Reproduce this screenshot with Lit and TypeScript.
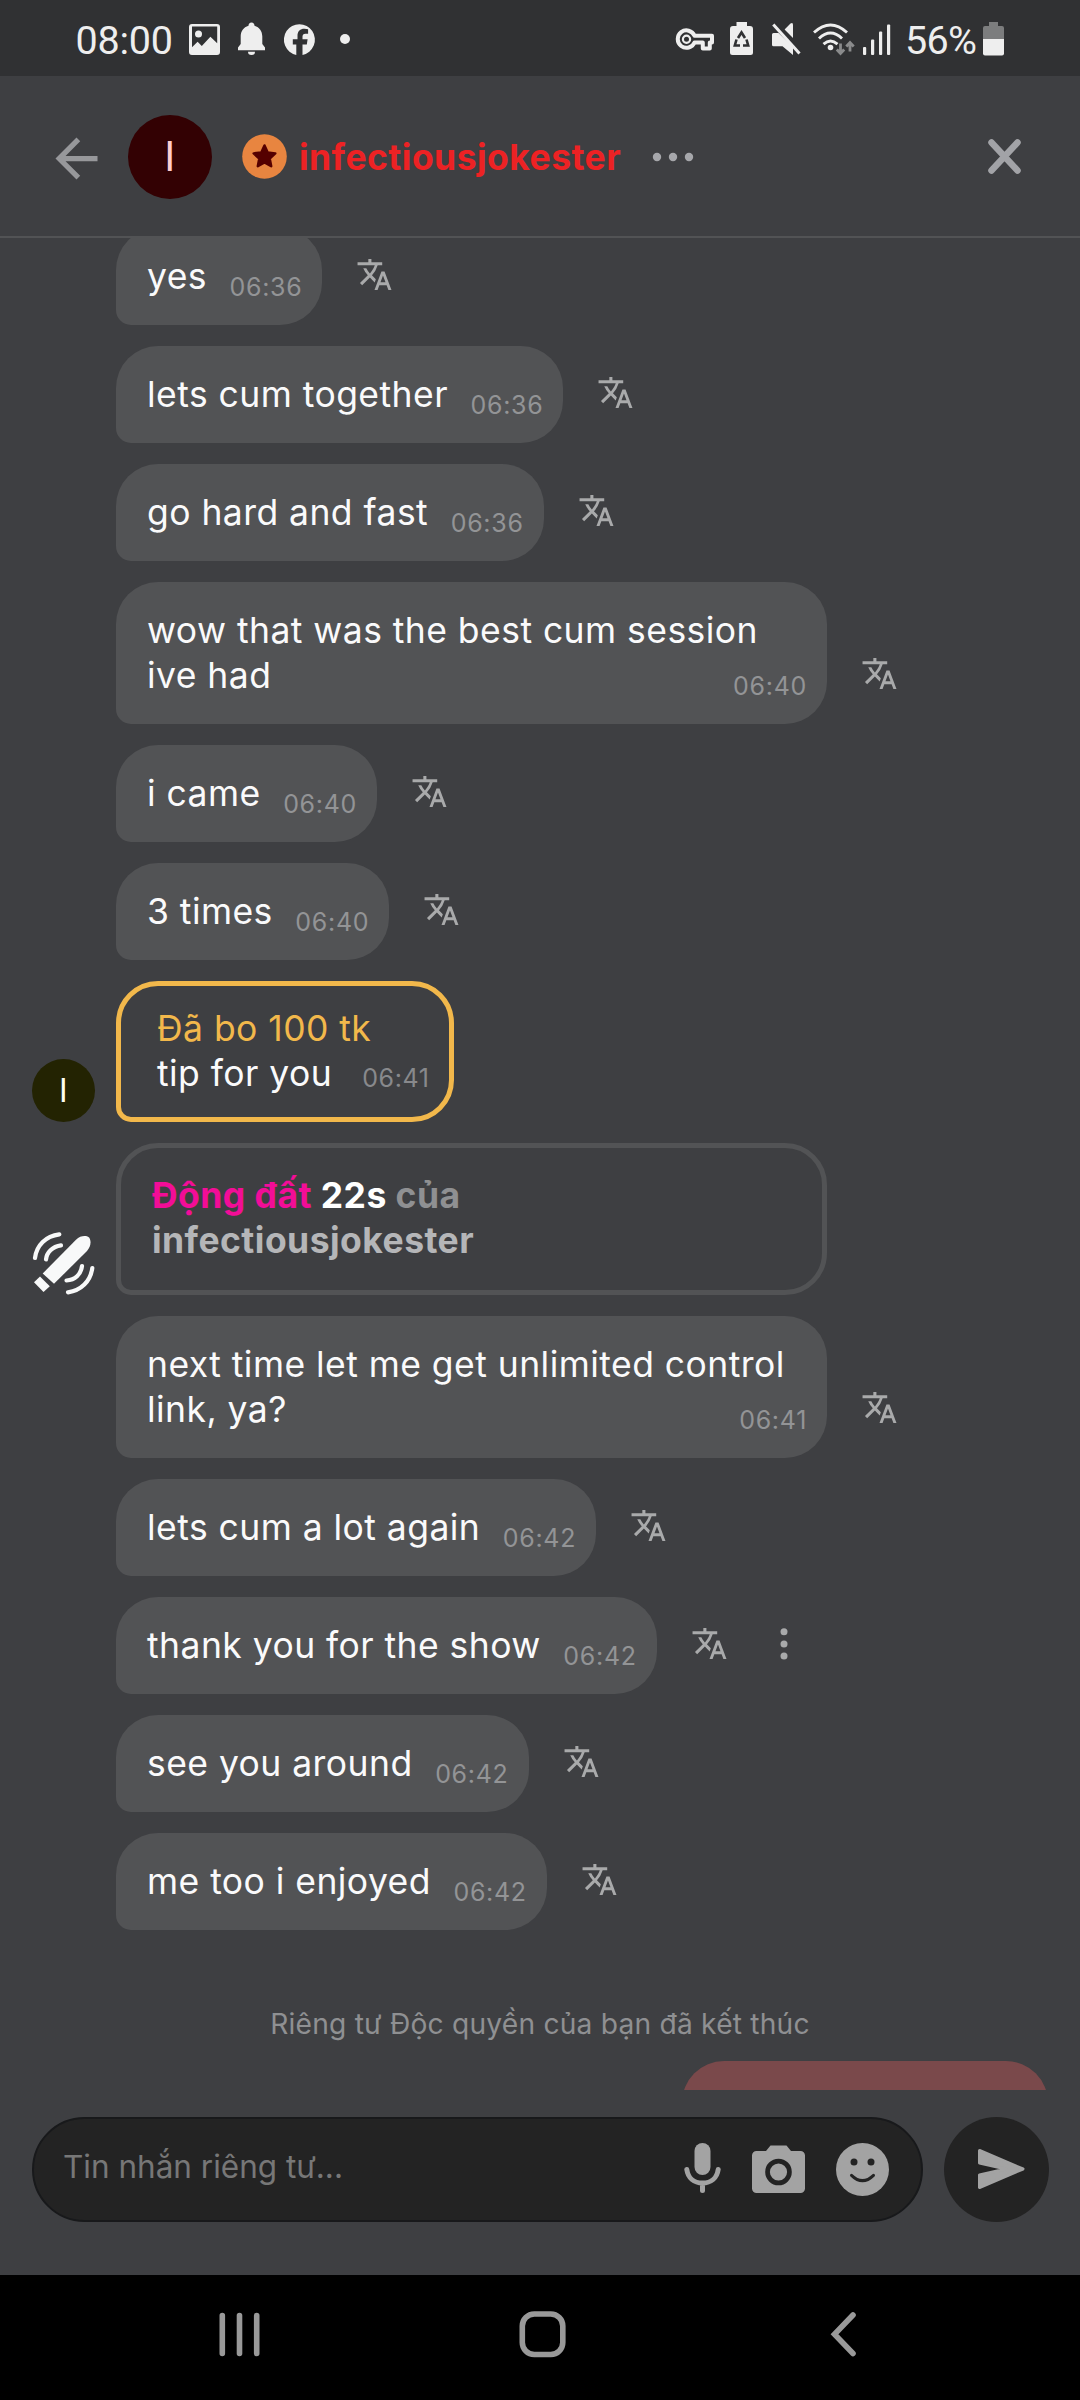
import { LitElement, html, css, svg, nothing } from "lit";
import { customElement, property } from "lit/decorators.js";
import { classMap } from "lit/directives/class-map.js";

interface Message {
  lines: string[];
  time: string;
  menu?: boolean;
}

const before: Message[] = [
  { lines: ["yes"], time: "06:36" },
  { lines: ["lets cum together"], time: "06:36" },
  { lines: ["go hard and fast"], time: "06:36" },
  { lines: ["wow that was the best cum session", "ive had"], time: "06:40" },
  { lines: ["i came"], time: "06:40" },
  { lines: ["3 times"], time: "06:40" },
];

const after: Message[] = [
  { lines: ["next time let me get unlimited control", "link, ya?"], time: "06:41" },
  { lines: ["lets cum a lot again"], time: "06:42" },
  { lines: ["thank you for the show"], time: "06:42", menu: true },
  { lines: ["see you around"], time: "06:42" },
  { lines: ["me too i enjoyed"], time: "06:42" },
];

@customElement("status-bar")
class StatusBar extends LitElement {
  static styles = css`
    :host {
      display: flex;
      box-sizing: border-box;
      height: 76px;
      padding: 0 76px 0 75.5px;
      justify-content: space-between;
      background: #303133;
      color: #eeeeee;
      font: 39.5px/47px Roboto, sans-serif;
    }
    .side { display: flex; padding-top: 17px; align-items: flex-start; }
    .clock { width: 113.5px; letter-spacing: -0.2px; }
    .percent { width: 78px; letter-spacing: -0.7px; }
    svg { display: block; height: 36px; margin-top: 4px; fill: #eeeeee; overflow: visible; flex: none; }
    .w49 { width: 49px; }
    .w45 { width: 45px; }
    .w57 { width: 57px; }
    .w10 { width: 10px; }
    .w54 { width: 54px; }
    .w42 { width: 42px; }
    .w41 { width: 41px; }
    .w50 { width: 50px; }
    .w43 { width: 42px; }
    .w21 { width: 21px; }
  `;
  render() {
    return html`
      <div class="side">
        <span class="clock">08:00</span>
        <svg class="w49" viewBox="0 0 49 36">
          <path fill-rule="evenodd" d="M3 3h25a3 3 0 0 1 3 3v25a3 3 0 0 1-3 3H3a3 3 0 0 1-3-3V6a3 3 0 0 1 3-3zm0 2.6v20.6l5.6-5.4 4.2 4.2 8.6-9.2 6.8 6.4V5.6z"/>
          <circle cx="9.5" cy="13" r="3.5"/>
        </svg>
        <svg class="w45" viewBox="0 0 45 36">
          <path d="M13.5 1.5c1.9 0 3 1.300 3 3.200 5 1.400 7.800 5.600 7.800 10.800v7.500l2.700 3.500v2.700H0v-2.700l2.700-3.500v-7.500c0-5.200 2.800-9.400 7.800-10.800 0-1.900 1.100-3.200 3-3.200z"/>
          <path d="M10 30.800h7a3.500 3.200 0 0 1-7 0z"/>
        </svg>
        <svg class="w57" viewBox="0 0 57 36">
          <path d="M12.300 33.900A15.500 15.500 0 1 1 18.500 33.900V23.500h4.300l.8-5.300h-5.100v-2.700c0-1.700.9-2.800 2.900-2.800h2.700V8.200c-.9-.2-2.300-.4-3.700-.4-4.200 0-6.900 2.500-6.900 7v3.400H8.800v5.300h3.500z" transform="translate(1)"/>
        </svg>
        <svg class="w10" viewBox="0 0 10 36"><circle cx="5" cy="18" r="5"/></svg>
      </div>
      <div class="side">
        <svg class="w54" viewBox="0 0 54 36">
          <path fill="none" stroke="#eeeeee" stroke-width="4" stroke-linejoin="round" d="M18.500 14.800H36v6.600h-2.200v6h-7v-6h-8.300a8.700 8.700 0 1 1 0-6.600z"/>
          <circle cx="10.500" cy="18.200" r="3.600" fill="none" stroke="#eeeeee" stroke-width="2.200"/>
        </svg>
        <svg class="w42" viewBox="0 0 42 36">
          <path d="M6.500 1h10.500v4H20a3 3 0 0 1 3 3v23.500a2.500 2.500 0 0 1-2.500 2.500h-18A2.500 2.500 0 0 1 0 31.500V8a3 3 0 0 1 3-3h3.500z"/>
          <g fill="none" stroke="#303133" stroke-width="2.600">
            <path d="M8 17l3.500-5.500L15 17"/><path d="M6.500 18.500L4.800 24.500H10"/><path d="M16.500 18.500l1.700 6H13"/>
          </g>
        </svg>
        <svg class="w41" viewBox="0 0 41 36">
          <path d="M0 13.500Q0 12 1.500 12H6.500L21 26v8L10.500 25.300H1.500Q0 25.300 0 23.800z"/>
          <path d="M12.600 8.600L18.500 2.600Q21 1 21 4V17z"/>
          <path fill="none" stroke="#eeeeee" stroke-width="3" d="M1.300 3.500L27.500 32.500"/>
        </svg>
        <svg class="w50" viewBox="0 0 50 36">
          <g fill="none" stroke="#eeeeee" stroke-width="2.900">
            <path d="M1 11.500Q17.500-3.500 34 11.500"/><path d="M6 17.500Q17.500 6.500 29 17.500"/><path d="M10.500 23.200Q17.500 17 24.500 23.200"/>
          </g>
          <circle cx="17.500" cy="26.500" r="2.800"/>
          <g fill="none" stroke="#8a8b8c" stroke-width="2.800"><path d="M27.500 22.500V32M23.800 28.500l3.700 4 3.700-4"/><path d="M37 30.500V21.500M33.300 25.500l3.700-4 3.700 4"/></g>
        </svg>
        <svg class="w43" viewBox="0 0 42 36">
          <rect x="0" y="26" width="3.200" height="8" rx="1"/><rect x="8" y="18.500" width="3.200" height="15.500" rx="1"/>
          <rect x="16" y="10.500" width="3.200" height="23.500" rx="1"/><rect x="24" y="3.500" width="3.200" height="30.500" rx="1"/>
        </svg>
        <span class="percent">56%</span>
        <svg class="w21" viewBox="0 0 21 36">
          <path fill="#7c7d7e" d="M6 1h9v4h4a2 2 0 0 1 2 2v11H0V7a2 2 0 0 1 2-2h4z"/>
          <path d="M0 18h21v14.500a2 2 0 0 1-2 2H2a2 2 0 0 1-2-2z"/>
        </svg>
      </div>
    `;
  }
}

@customElement("chat-header")
class ChatHeader extends LitElement {
  static styles = css`
    :host {
      display: flex;
      box-sizing: border-box;
      height: 162px;
      padding: 1px 44px 0 45px;
      align-items: center;
      border-bottom: 2px solid #525355;
    }
    svg { display: block; flex: none; }
    .back { width: 63px; height: 63px; margin-top: 3px; fill: #97989b; }
    .avatar {
      display: flex;
      align-items: center;
      justify-content: center;
      width: 84px;
      height: 84px;
      margin: 0 30px 0 20px;
      border-radius: 50%;
      background: #330103;
      color: #ffcdcf;
      font-size: 41px;
    }
    .badge { width: 45px; height: 45px; }
    .name { margin: 2px 31px 0 12px; color: #ed2224; font-weight: 700; font-size: 35.5px; line-height: 45px; }
    .dots { width: 42px; height: 12px; fill: #a6a7ab; }
    .close { width: 63px; height: 63px; margin-left: auto; stroke: #a2a3a7; stroke-width: 6.500; stroke-linecap: round; }
  `;
  render() {
    return html`
      <svg class="back" viewBox="0 0 24 24"><path d="M20 11H7.830l5.590-5.590L12 4l-8 8 8 8 1.410-1.410L7.830 13H20z"/></svg>
      <span class="avatar">I</span>
      <svg class="badge" viewBox="0 0 45 45">
        <circle cx="22.500" cy="22.500" r="22.300" fill="#e88540"/>
        <path fill="#550000" stroke="#550000" stroke-width="2.500" stroke-linejoin="round" d="M22.500 11.500l3.200 7 7.600.9-5.600 5.200 1.500 7.600-6.700-3.800-6.700 3.800 1.500-7.600-5.600-5.200 7.600-.9z"/>
      </svg>
      <span class="name">infectiousjokester</span>
      <svg class="dots" viewBox="0 0 42 12"><circle cx="5" cy="6" r="4.200"/><circle cx="21" cy="6" r="4.200"/><circle cx="37" cy="6" r="4.200"/></svg>
      <svg class="close" viewBox="0 0 63 63"><path d="M18.500 17.500L44.500 45.500M44.500 17.500L18.500 45.500"/></svg>
    `;
  }
}

@customElement("chat-message")
class ChatMessage extends LitElement {
  @property({ attribute: false }) message!: Message;
  static styles = css`
    :host { display: flex; align-items: flex-end; margin-bottom: 21px; padding-left: 116px; }
    .bubble {
      box-sizing: border-box;
      padding: 26px 20px 26px 31px;
      border-radius: 42px 42px 42px 15px;
      background: #525355;
      color: #fafafb;
    }
    .wide { width: 711px; }
    .row { display: flex; justify-content: space-between; align-items: flex-end; gap: 22.5px; }
    .line { display: block; white-space: nowrap; }
    .time { margin-bottom: -6px; color: #939496; font-size: 25px; line-height: 36px; letter-spacing: 0.700px; }
    svg { flex: none; display: block; fill: #a9aaab; }
    .translate { width: 37px; height: 37px; margin: 0 0 32px 34px; }
    .menu { width: 8px; height: 34px; margin: 0 0 33px 52px; }
  `;
  render() {
    const { lines, time, menu } = this.message;
    const last = lines[lines.length - 1];
    return html`
      <div class=${classMap({ bubble: true, wide: lines.length > 1 })}>
        ${lines.slice(0, -1).map((line) => html`<span class="line">${line}</span>`)}
        <div class="row"><span class="line">${last}</span><span class="time">${time}</span></div>
      </div>
      <svg class="translate" viewBox="0 0 24 24"><path d="M12.870 15.070l-2.540-2.510.030-.030A17.520 17.520 0 0 0 14.070 6H17V4h-7V2H8v2H1v1.990h11.170C11.500 7.920 10.440 9.750 9 11.350 8.070 10.320 7.300 9.190 6.690 8h-2c.730 1.630 1.730 3.170 2.980 4.560l-5.090 5.020L4 19l5-5 3.110 3.110.760-2.040zM18.500 10h-2L12 22h2l1.120-3h4.750L21 22h2l-4.500-12zm-2.620 7l1.620-4.330L19.120 17h-3.240z"/></svg>
      ${menu ? html`<svg class="menu" viewBox="0 0 8 34"><circle cx="4" cy="4.700" r="3.500"/><circle cx="4" cy="17" r="3.500"/><circle cx="4" cy="29" r="3.500"/></svg>` : nothing}
    `;
  }
}

@customElement("chat-composer")
class ChatComposer extends LitElement {
  static styles = css`
    :host { display: flex; box-sizing: border-box; height: 185px; padding: 27px 31px 0 32px; gap: 21px; }
    .field {
      display: flex;
      flex: 1;
      box-sizing: border-box;
      height: 105px;
      padding: 0 32px 0 29px;
      align-items: center;
      border: 2px solid #18191b;
      border-radius: 53px;
      background: #232323;
    }
    .placeholder { flex: 1; margin-top: -6px; color: #777777; font-size: 31.5px; letter-spacing: 0; }
    svg { display: block; flex: none; fill: #a3a3a3; }
    .mic { width: 37px; height: 53px; margin-right: 31px; }
    .camera { width: 53px; height: 53px; margin-right: 31px; }
    .smile { width: 53px; height: 53px; }
    .send { display: flex; width: 105px; height: 105px; border-radius: 50%; background: #232323; }
    .plane { width: 105px; height: 105px; }
  `;
  render() {
    return html`
      <div class="field">
        <span class="placeholder">Tin nhắn riêng tư...</span>
        <svg class="mic" viewBox="0 0 37 53">
          <rect x="10.500" y="0" width="16" height="32" rx="8"/>
          <path fill="none" stroke="#a3a3a3" stroke-width="5" stroke-linecap="round" d="M2.800 26.500C4 35 10 40 18.500 40S33 35 34.200 26.500M18.500 40v7.500"/>
        </svg>
        <svg class="camera" viewBox="0 0 53 53">
          <path fill-rule="evenodd" d="M18.500 2.500h16l4.500 5.500h9.500a4.500 4.500 0 0 1 4.500 4.500v33a4.500 4.500 0 0 1-4.500 4.500h-44A4.500 4.500 0 0 1 0 45.500v-33A4.500 4.500 0 0 1 4.500 8H14zM26.500 15.700a13.300 13.300 0 1 0 0 26.600 13.300 13.300 0 0 0 0-26.600z"/>
          <circle cx="26.500" cy="29" r="8.600"/>
        </svg>
        <svg class="smile" viewBox="0 0 53 53">
          <circle cx="26.500" cy="26.500" r="26.500"/>
          <circle cx="18" cy="19" r="3.500" fill="#232323"/><circle cx="35" cy="19" r="3.500" fill="#232323"/>
          <path fill="none" stroke="#232323" stroke-width="3" stroke-linecap="round" d="M15.500 32.300Q26.500 43 37.500 32.300"/>
        </svg>
      </div>
      <span class="send">
        <svg class="plane" viewBox="0 0 105 105"><path stroke="#a3a3a3" stroke-width="3" stroke-linejoin="round" d="M35.500 33.500L79 52 35.500 70.500V58L62 52 35.500 46z"/></svg>
      </span>
    `;
  }
}

@customElement("nav-bar")
class NavBar extends LitElement {
  static styles = css`
    :host {
      display: flex;
      box-sizing: border-box;
      height: 125px;
      padding: 35px 223px 0 216px;
      justify-content: space-between;
      background: #000000;
    }
    svg { display: block; height: 48px; fill: none; stroke: #999999; stroke-width: 5.600; stroke-linecap: round; stroke-linejoin: round; }
    .recents, .home { width: 48px; }
    .home { margin-right: 10px; }
    .prev { width: 27px; }
  `;
  render() {
    return html`
      <svg class="recents" viewBox="0 0 48 48"><path d="M6.300 5.500v38M23.500 5.500v38M40.700 5.500v38"/></svg>
      <svg class="home" viewBox="0 0 48 48"><rect x="4.300" y="4" width="40.500" height="40.500" rx="12"/></svg>
      <svg class="prev" viewBox="0 0 27 48"><path stroke-linejoin="miter" d="M23 5L4.500 24.300 23 43.500"/></svg>
    `;
  }
}

@customElement("app-root")
class AppRoot extends LitElement {
  static styles = css`
    :host {
      display: flex;
      flex-direction: column;
      width: 1080px;
      height: 2400px;
      overflow: hidden;
      background: #3e3f42;
      font-family: Inter, "Noto Sans", sans-serif;
      font-size: 35.5px;
      line-height: 45px;
      letter-spacing: 0.450px;
    }
    .list { flex: 1; min-height: 0; overflow: hidden; }
    .scroll { margin-top: -10px; }
    .entry { display: flex; align-items: flex-end; margin-bottom: 21px; padding-left: 32px; gap: 21px; }
    .avatar {
      display: flex;
      align-items: center;
      justify-content: center;
      width: 63px;
      height: 63px;
      border-radius: 50%;
      background: #232302;
      color: #fdfdf0;
      font-size: 32px;
    }
    .box { box-sizing: border-box; border: 5px solid #525355; border-radius: 42px 42px 42px 15px; white-space: nowrap; }
    .tip { padding: 20px 20px 21px 36px; border-color: #f2b84b; color: #fafafb; }
    .amount { color: #f2b84b; }
    .row { display: flex; align-items: flex-end; gap: 30px; }
    .time { color: #88898c; font-size: 25px; line-height: 36px; letter-spacing: 0.600px; }
    .event { width: 711px; padding: 25px 30px 27px 31px; font-weight: 700; color: #8f9092; }
    .kind { color: #f20d97; }
    .span { color: #ffffff; }
    .who { color: #b5b6b8; }
    .toy { display: block; width: 63px; height: 63px; fill: #f8f9f9; }
    .notice { padding-top: 51px; height: 45px; margin-bottom: 14px; text-align: center; color: #8f9092; font-size: 28.2px; letter-spacing: 0.200px; }
    .mine { width: 366px; height: 97px; margin-left: 682px; border-radius: 42px 42px 15px 42px; background: #7a494b; }
  `;
  render() {
    return html`
      <status-bar></status-bar>
      <chat-header></chat-header>
      <div class="list">
        <div class="scroll">
          ${before.map((m) => html`<chat-message .message=${m}></chat-message>`)}
          <div class="entry">
            <span class="avatar">I</span>
            <div class="box tip">
              <div class="amount">Đã bo 100 tk</div>
              <div class="row"><span>tip for you</span><span class="time">06:41</span></div>
            </div>
          </div>
          <div class="entry">
            <svg class="toy" viewBox="0 0 63 63">
              ${svg`<path d="M10.700 41.500L44 7.800C48.500 3.500 54 3.300 57 5.500 59.500 8.500 59 14.500 55 19L22 51.800z"/>
              <path d="M8 44.500L17.800 54.300 11.500 60 2 50.200z"/>
              <g fill="none" stroke="#f8f9f9" stroke-width="4.200" stroke-linecap="round">
                <path d="M3 26C4.500 13 14 4 27.300 2.300"/><path d="M14 27.500C14.500 20.500 20.500 14.500 29 13.300"/>
                <path d="M34.500 48.500C43 48 49 42.500 50 34"/><path d="M36 60.300C49 58.500 58.500 49.500 60.300 36"/>
              </g>`}
            </svg>
            <div class="box event">
              <div><span class="kind">Động đất</span> <span class="span">22s</span> của</div>
              <div class="who">infectiousjokester</div>
            </div>
          </div>
          ${after.map((m) => html`<chat-message .message=${m}></chat-message>`)}
          <div class="notice">Riêng tư Độc quyền của bạn đã kết thúc</div>
          <div class="mine"></div>
        </div>
      </div>
      <chat-composer></chat-composer>
      <nav-bar></nav-bar>
    `;
  }
}
